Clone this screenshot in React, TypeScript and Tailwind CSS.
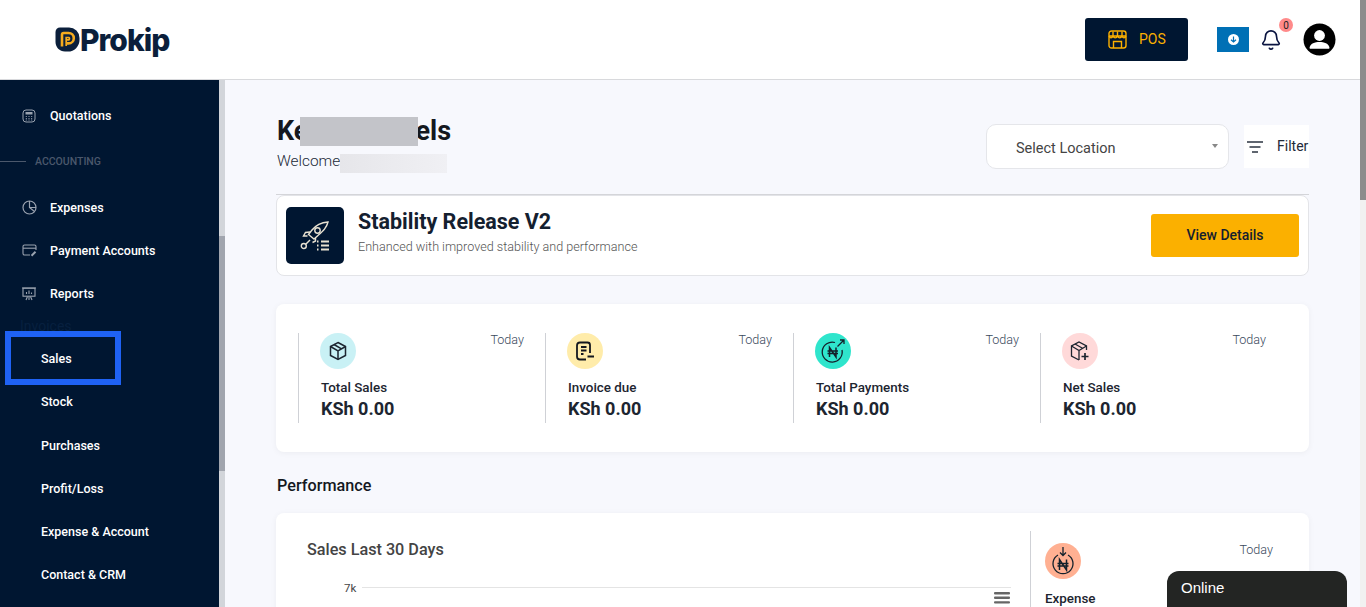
import { Bell } from 'lucide-react';

function ProkipMark() {
  return (
    <svg width="25" height="25" viewBox="0 0 25 25">
      <path d="M5 0.5H14A10.5 10.5 0 0 1 24.5 11V13A11.5 11.5 0 0 1 13 24.5H10C4.5 24.5 .5 20 .5 15V5C.5 2.5 2.5.5 5 .5Z" fill="#0b1f3b" />
      <path d="M7 19.5V7.6C7 6.6 7.7 6 8.7 6H13.6A5.2 5.2 0 0 1 13.6 16.4H11.5" fill="none" stroke="#f5ab1e" strokeWidth="2.6" />
      <path d="M11.2 19V10.5H13.8A1.4 1.4 0 0 1 13.8 12.9H12" fill="none" stroke="#f5ab1e" strokeWidth="1.7" />
    </svg>
  );
}

function IconCalc() {
  return (
    <svg width="14" height="14" viewBox="0 0 14 14" fill="none" stroke="#9aa3b0" strokeWidth="1">
      <rect x="1" y="1" width="12" height="12" rx="3" />
      <rect x="3.5" y="3" width="7" height="2.5" fill="#9aa3b0" stroke="none" />
      <path d="M3.8 7.5h1M6.5 7.5h1M9.2 7.5h1M3.8 9.5h1M6.5 9.5h1M9.2 9.5h1M3.8 11h1M6.5 11h1M9.2 11h1" />
    </svg>
  );
}

function IconPie() {
  return (
    <svg width="15" height="15" viewBox="0 0 15 15" fill="none" stroke="#9aa3b0" strokeWidth="1.2">
      <circle cx="7.5" cy="7.5" r="6.5" />
      <path d="M7.5 1V7.5L12.5 11.5M7.5 7.5H14" />
    </svg>
  );
}

function IconCard() {
  return (
    <svg width="15" height="13" viewBox="0 0 15 13" fill="none" stroke="#9aa3b0" strokeWidth="1.1">
      <path d="M8 11H2.5C1.5 11 1 10.4 1 9.5V2.5C1 1.5 1.5 1 2.5 1H12.5C13.5 1 14 1.5 14 2.5V6" />
      <path d="M1 4.2H14" />
      <path d="M9.5 11.8L13.5 7.8" strokeWidth="2" />
    </svg>
  );
}

function IconBoard() {
  return (
    <svg width="14" height="14" viewBox="0 0 14 14" fill="none" stroke="#9aa3b0" strokeWidth="1.1">
      <rect x="1" y="1.2" width="12" height="8" />
      <path d="M4.5 7V5M7 7V3.5M9.5 7V5.5M7 9.5V13M4 13L5.5 9.5M10 13L8.5 9.5M0 1H14" />
    </svg>
  );
}

function StoreIcon() {
  return (
    <svg width="19" height="19" viewBox="0 0 19 19" fill="none" stroke="#fbb000" strokeWidth="1.4">
      <rect x="1" y="1" width="17" height="17" rx="2.5" />
      <path d="M1 6H18M5 1.5V6M9.5 1.5V6M14 1.5V6M1 6C2 8.5 4 8.5 5 6C6 8.5 8.5 8.5 9.5 6C10.5 8.5 13 8.5 14 6C15 8.5 17 8.5 18 6M5.5 18V11.5H13.5V18" />
    </svg>
  );
}

function UserIcon() {
  return (
    <svg width="33" height="33" viewBox="0 0 33 33">
      <circle cx="16.5" cy="16.5" r="16" fill="#000" />
      <circle cx="16.5" cy="12.5" r="5.4" fill="#fff" />
      <path d="M6.5 25C7 20.5 12 19 16.5 19S26 20.5 26.5 25C26.5 25.5 26 25.7 25.5 25.7H7.5C7 25.7 6.5 25.5 6.5 25Z" fill="#fff" />
    </svg>
  );
}

function FilterIcon() {
  return (
    <svg width="16" height="12" viewBox="0 0 16 12" fill="none" stroke="#2b3340" strokeWidth="1.6">
      <path d="M0 1H16M2.5 6H13.5M5 11H11" />
    </svg>
  );
}

function RocketIcon() {
  return (
    <svg width="30" height="30" viewBox="0 0 30 30" fill="none" stroke="#e8e2d2" strokeWidth="1.4">
      <path d="M28 1C22 1.5 16 4 12 9L8.5 13.5L14 18L18 14.5C23 10 26.5 7 28 1Z" />
      <circle cx="17.5" cy="9.5" r="2.7" />
      <path d="M10 11L5.5 11.5L3.5 15L7.5 15M15.5 17V20L12.5 21.5" />
      <circle cx="3.8" cy="25" r="2.5" />
      <path d="M6 23L10 19" />
      <path d="M17 20.5H18.5M21 20.5H29M17 24.5H18.5M21 24.5H29M17 28.5H18.5M21 28.5H29" strokeWidth="1.8" />
    </svg>
  );
}

function BoxIcon() {
  return (
    <svg width="20" height="20" viewBox="0 0 20 20" fill="none" stroke="#1d2530" strokeWidth="1.5">
      <path d="M10 1.5L17.5 5.5V14.5L10 18.5L2.5 14.5V5.5Z" />
      <path d="M2.5 5.5L10 10L17.5 5.5M10 10V18.5M6 3.5L13.5 7.8" />
    </svg>
  );
}

function InvoiceIcon() {
  return (
    <svg width="20" height="20" viewBox="0 0 20 20" fill="none" stroke="#14181f" strokeWidth="1.8">
      <path d="M15 12V4C15 2.3 14 1.5 12.5 1.5H5C3 1.5 2 2.5 2 4.5V15.5C2 17.5 3 18.5 5 18.5H11" />
      <path d="M6 6H11.5M6 9.5H11.5M6 13H8.5M12.5 15.5H19" />
    </svg>
  );
}

function NairaUpIcon() {
  return (
    <svg width="26" height="26" viewBox="0 0 26 26" fill="none" stroke="#14212b" strokeWidth="1.3">
      <path d="M15 4.5A10 10 0 1 0 22 12" />
      <path d="M9.5 19V9.5L16 19V9.5M7.5 13H18M7.5 15.5H18" strokeWidth="1.5" />
      <path d="M17.5 8.5L24 2M20 2H24V6" />
    </svg>
  );
}

function BoxPlusIcon() {
  return (
    <svg width="22" height="22" viewBox="0 0 22 22" fill="none" stroke="#1d2530" strokeWidth="1.3">
      <path d="M10 20L2.5 16V6L10 2L17.5 6V10" />
      <path d="M2.5 6L10 10.5L17.5 6M10 10.5V20M6 4L13.5 8.2" />
      <path d="M16 13V20M12.5 16.5H19.5" strokeWidth="1.7" />
    </svg>
  );
}

function NairaDownIcon() {
  return (
    <svg width="24" height="28" viewBox="0 0 24 28" fill="none" stroke="#14212b" strokeWidth="1.3">
      <path d="M7 8A10 10 0 1 0 17 8" />
      <path d="M12 0V8M9 5.5L12 8.5L15 5.5" />
      <path d="M8.5 23V12.5L15.5 23V12.5M6.5 16.5H17.5M6.5 19H17.5" strokeWidth="1.5" />
    </svg>
  );
}

const stats = [
  { label: 'Total Sales', bg: 'bg-[#c9f1f5]', icon: <BoxIcon /> },
  { label: 'Invoice due', bg: 'bg-[#ffecaa]', icon: <InvoiceIcon /> },
  { label: 'Total Payments', bg: 'bg-[#2fe5cc]', icon: <NairaUpIcon /> },
  { label: 'Net Sales', bg: 'bg-[#ffd9d9]', icon: <BoxPlusIcon /> },
];

const subItems = [
  { label: 'Stock', cls: 'h-[44px]' },
  { label: 'Purchases', cls: 'h-[43px] pt-[2px]' },
  { label: 'Profit/Loss', cls: 'h-[43px] pt-[2px]' },
  { label: 'Expense & Account', cls: 'h-[43px] pt-[2px]' },
  { label: 'Contact & CRM', cls: 'h-[43px] pt-[2px]' },
];

function NavRow({ icon, label }: { icon: React.ReactNode; label: string }) {
  return (
    <div className="flex h-[43px] items-center pl-[22px]">
      <span className="flex w-[28px] items-center">{icon}</span>
      <span className="pt-[2px] text-[12.5px] font-medium text-white">{label}</span>
    </div>
  );
}

export default function App() {
  return (
    <div
      className="relative flex h-[607px] w-[1366px] overflow-hidden bg-[#f7f8fd]"
      style={{ fontFamily: 'Roboto, sans-serif' }}
    >
      <div className="flex h-full w-[1360px] flex-col">
        {/* top bar */}
        <header className="flex h-[80px] shrink-0 items-center border-b border-[#d8d9dc] bg-white pl-[55px] pr-[24px]">
          <div className="flex items-center">
            <ProkipMark />
            <span
              className="text-[30px] leading-none font-extrabold tracking-[-1px] text-[#0b1f3b]"
              style={{ fontFamily: 'Inter, sans-serif' }}
            >
              Prokip
            </span>
          </div>
          <div className="ml-auto flex items-center">
            <button className="flex h-[43px] w-[103px] items-center rounded-[3px] bg-[#001631] pl-[23px]">
              <StoreIcon />
              <span className="ml-[12px] text-[14px] text-[#fbb000]">POS</span>
            </button>
            <div className="ml-[29px] flex h-[25px] w-[32px] items-center justify-center bg-[#0070b5]">
              <span className="flex h-[11px] w-[11px] items-center justify-center rounded-full bg-white">
                <svg width="7" height="7" viewBox="0 0 7 7" fill="none" stroke="#0070b5" strokeWidth="1.2">
                  <path d="M3.5 0.5V6M1 3.8L3.5 6L6 3.8" />
                </svg>
              </span>
            </div>
            <div className="relative ml-[11px] flex h-[33px] w-[22px] items-center justify-center">
              <Bell size={24} color="#0a1440" strokeWidth={1.8} />
              <span className="absolute top-[-5px] right-[-11px] flex h-[14px] w-[14px] items-center justify-center rounded-full bg-[#ff8a8a] text-[10px] text-[#222]">
                0
              </span>
            </div>
            <div className="ml-[21px]">
              <UserIcon />
            </div>
          </div>
        </header>

        <div className="flex min-h-0 flex-1">
          {/* sidebar */}
          <aside className="relative w-[219px] shrink-0 overflow-hidden bg-[#001631] pt-[14px]">
            <NavRow icon={<IconCalc />} label="Quotations" />
            <div className="mt-[3px] flex h-[43px] items-center">
              <span className="h-px w-[26px] bg-[#4b586c]" />
              <span className="ml-[9px] text-[10.5px] font-medium text-[#4b586c]">ACCOUNTING</span>
            </div>
            <div className="mt-[3px]">
              <NavRow icon={<IconPie />} label="Expenses" />
              <NavRow icon={<IconCard />} label="Payment Accounts" />
              <NavRow icon={<IconBoard />} label="Reports" />
            </div>
            <div className="flex h-[22px] items-center pl-[20px] text-[14px] text-[#07203f]">Invoices</div>
            <div className="flex h-[43px] items-center pt-[2px] pl-[41px] text-[12.5px] font-medium text-white">Sales</div>
            {subItems.map((item) => (
              <div key={item.label} className={`flex items-center pl-[41px] text-[12.5px] font-medium text-white ${item.cls}`}>
                {item.label}
              </div>
            ))}
            {/* annotation box drawn on the screenshot */}
            <div className="absolute top-[251px] left-[5px] h-[54px] w-[116px] border-[6px] border-[#1f62f4]" />
          </aside>

          {/* sidebar scrollbar */}
          <div className="w-[6px] shrink-0 bg-[#d2d5da] pt-[156px]">
            <div className="h-[235px] bg-[#a1a5ae]" />
          </div>

          {/* main */}
          <main className="min-w-0 flex-1 overflow-hidden px-[51px]">
            <div className="flex h-[115px] items-start justify-between border-b border-[#d4d5d9] pt-[36px]">
              <div className="ml-[1px]">
                <div className="flex h-[30px] items-center text-[27px] font-bold text-[#14181f]">
                  <span>Ke</span>
                  <span className="ml-[-8px] h-[29px] w-[118px] bg-[#c3c4c9] blur-[0.5px]" />
                  <span className="ml-[-3px]">els</span>
                </div>
                <div className="mt-[5px] flex h-[22px] items-center text-[15.4px] font-light text-[#222a38]">
                  <span>Welcome</span>
                  <span className="mt-[3px] h-[19px] w-[107px] bg-gradient-to-r from-[#e6e6ea] to-[#f0f0f4]" />
                </div>
              </div>
              <div className="flex">
                <div className="relative mt-[8px] flex h-[45px] w-[243px] items-center rounded-[10px] border border-[#e5e6ea] bg-white pt-[5px] pl-[29px] text-[14.5px] text-[#444]">
                  Select Location
                  <span className="absolute top-[19px] right-[10px] h-0 w-0 border-x-[3px] border-t-[4px] border-x-transparent border-t-[#888]" />
                </div>
                <div className="mt-[9px] ml-[15px] flex h-[43px] w-[65px] items-center bg-white pl-[3px]">
                  <FilterIcon />
                  <span className="ml-[14px] text-[14px] text-[#222a38]">Filter</span>
                </div>
              </div>
            </div>

            <div className="flex h-[81px] items-center rounded-[8px] border border-[#e3e4e8] bg-white px-[9px]">
              <div className="flex h-[57px] w-[58px] items-center justify-center rounded-[5px] bg-[#001631]">
                <RocketIcon />
              </div>
              <div className="ml-[14px] mb-[8px]">
                <div className="text-[21.5px] leading-[28px] font-bold text-[#14202f]">Stability Release V2</div>
                <div className="mt-[3px] text-[12.6px] leading-[16px] font-light text-[#555]">
                  Enhanced with improved stability and performance
                </div>
              </div>
              <button className="ml-auto h-[43px] w-[148px] rounded-[3px] bg-[#fbb000] text-[14px] font-medium text-[#14202f]">
                View Details
              </button>
            </div>

            <div className="mt-[28px] grid h-[148px] grid-cols-[247px_248px_247px_247px] rounded-[8px] bg-white pt-[29px] pl-[22px] shadow-[0_1px_6px_rgba(0,0,0,0.05)]">
              {stats.map((s) => (
                <div key={s.label} className="relative h-[90px] border-l border-[#cfd1d6] pl-[21px]">
                  <span className={`flex h-[36px] w-[36px] items-center justify-center rounded-full ${s.bg}`}>{s.icon}</span>
                  <span className="absolute top-0 right-[21px] text-[12.6px] leading-[14px] font-light text-[#3a4a5c]">Today</span>
                  <div className="mt-[11px] ml-[1px] text-[13.4px] leading-[16px] font-medium text-[#1d2530]">{s.label}</div>
                  <div className="mt-[2px] ml-[1px] text-[18px] leading-[22px] font-bold text-[#1d2530]">KSh 0.00</div>
                </div>
              ))}
            </div>

            <div className="mt-[24px] ml-[1px] text-[16.2px] leading-[19px] font-medium text-[#14181f]">Performance</div>

            <div className="mt-[18px] flex h-[200px] rounded-[8px] bg-white pt-[18px] shadow-[0_1px_6px_rgba(0,0,0,0.05)]">
              <div className="w-[754px] shrink-0">
                <div className="mt-[9px] pl-[31px] text-[16.2px] leading-[19px] font-medium text-[#444]">Sales Last 30 Days</div>
                <div className="mt-[22px] flex items-start">
                  <span className="ml-[68px] w-[18px] text-[11.5px] leading-[14px] text-[#444]">7k</span>
                  <div className="relative mt-[6px] h-px w-[649px] bg-[#e4e4e4]">
                    <svg className="absolute top-[5px] right-[1px]" width="16" height="12" viewBox="0 0 16 12" fill="#666">
                      <rect y="0" width="16" height="2.4" rx="1" />
                      <rect y="4.6" width="16" height="2.4" rx="1" />
                      <rect y="9.2" width="16" height="2.4" rx="1" />
                    </svg>
                  </div>
                </div>
              </div>
              <div className="relative h-full grow border-l border-[#cfd1d6] pt-[12px] pl-[14px]">
                <span className="flex h-[36px] w-[36px] items-center justify-center rounded-full bg-[#ffb092]">
                  <NairaDownIcon />
                </span>
                <span className="absolute top-[12px] right-[36px] text-[12.6px] leading-[14px] font-light text-[#3a4a5c]">Today</span>
                <div className="mt-[12px] text-[13.4px] leading-[16px] font-medium text-[#1d2530]">Expense</div>
              </div>
            </div>
          </main>
        </div>
      </div>

      {/* page scrollbar */}
      <div className="h-full w-[6px] shrink-0 bg-[#f1f1f1]">
        <div className="h-[200px] bg-[#8c8c8c]" />
      </div>

      {/* chat widget */}
      <div
        className="absolute right-[19px] bottom-0 h-[36px] w-[180px] rounded-t-[12px] bg-[#232523] pt-[8px] pl-[14px] text-[15px] leading-[18px] text-white"
        style={{ fontFamily: '"Liberation Sans", sans-serif' }}
      >
        Online
      </div>
    </div>
  );
}
